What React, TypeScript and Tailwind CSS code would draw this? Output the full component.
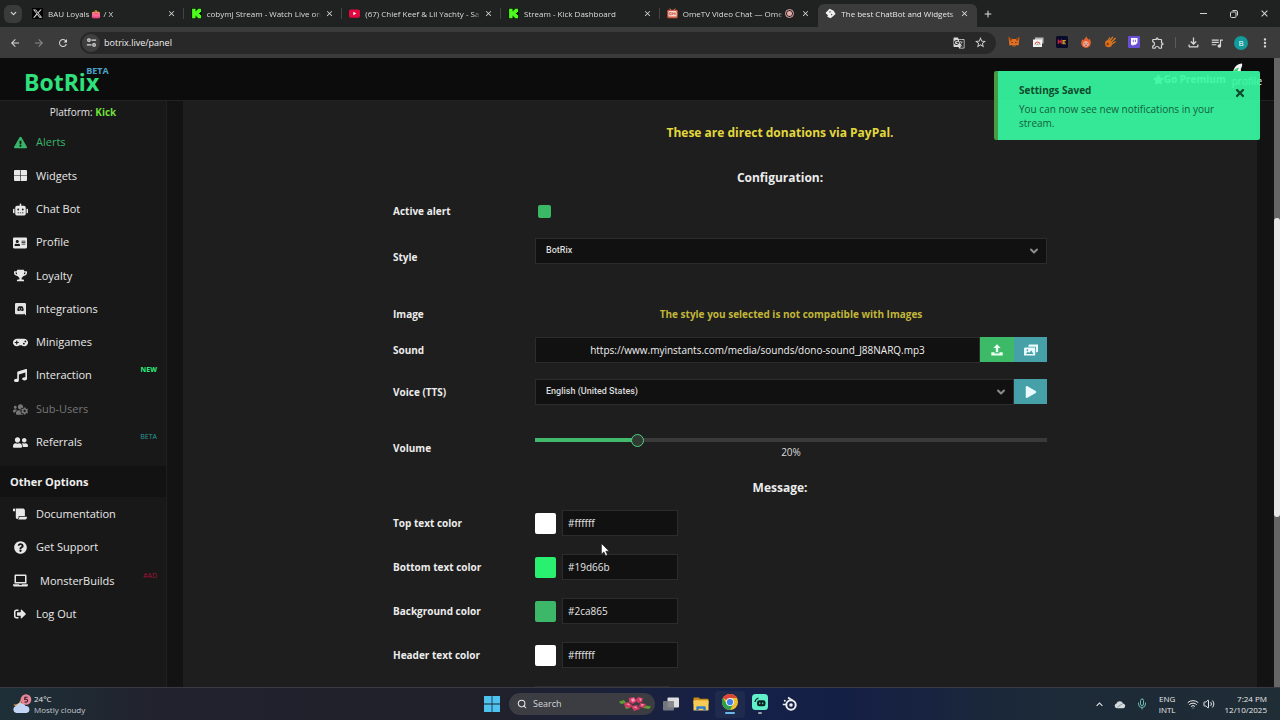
import { useState, type ReactNode } from "react";
import {
  FaAddressCard,
  FaExclamationTriangle,
  FaGamepad,
  FaLaptop,
  FaMusic,
  FaPlay,
  FaQuestionCircle,
  FaRobot,
  FaScroll,
  FaSignOutAlt,
  FaStar,
  FaTimes,
  FaTrophy,
  FaUserFriends,
  FaUsersCog,
} from "react-icons/fa";
import {
  MdArrowBack,
  MdArrowForward,
  MdClose,
  MdExpandLess,
  MdGTranslate,
  MdMoreVert,
  MdOutlineExtension,
  MdOutlineFileDownload,
  MdOutlineQueueMusic,
  MdRefresh,
  MdStarOutline,
} from "react-icons/md";
import { ChevronDown, Mic, Plus, Search, Volume2, Wifi } from "lucide-react";

/* ---------- drawings ---------- */

const XLogo = () => (
  <svg viewBox="0 0 24 24" className="size-[11px] shrink-0 bg-black">
    <path
      fill="#d8d8d8"
      d="M18.2 3h3.1l-6.9 7.9L22.5 21h-6.3l-5-6.5L5.500 21H2.400l7.300-8.400L2 3h6.500l4.500 6zm-1.100 16.200h1.700L7.500 4.700H5.700z"
    />
  </svg>
);

const KickLogo = () => (
  <svg viewBox="0 0 12 12" className="size-[11px] shrink-0">
    <rect width="12" height="12" rx="1" fill="#0b1a08" />
    <path fill="#4dfb1c" d="M1.200 .8h3.800v2.700h1V2.300h1.200V.8H11v3.600H9.800v1.100H8.600v1h1.200v1.100H11v3.600H7.200V9.700H6V8.500H5v2.700H1.200z" />
  </svg>
);

const YouTubeLogo = () => (
  <svg viewBox="0 0 12 12" className="size-[11px] shrink-0">
    <rect y="1.500" width="12" height="9" rx="2" fill="#e5073f" />
    <path fill="#fff" d="M4.700 4v4L8 6z" />
  </svg>
);

const OmeLogo = () => (
  <svg viewBox="0 0 12 12" className="size-[11px] shrink-0">
    <path stroke="#d9765f" strokeWidth="1" d="M3 .5 5 3M9 .5 7 3" />
    <rect x=".3" y="2" width="11.400" height="9.200" rx="1.500" fill="#d35a45" />
    <rect x="1.500" y="3.300" width="9" height="6" rx="1" fill="#f3d9cf" />
    <path stroke="#d35a45" strokeWidth=".9" fill="none" d="M2.600 5h2v2.400h-2zM6 7.500V5l1 1.200L8 5v2.500M9 5v2.500" />
  </svg>
);

const BotrixLogo = () => (
  <svg viewBox="0 0 12 12" className="size-[11px] shrink-0">
    <path fill="#f2f2f2" d="M5 .8 9.500 3l2 3.500L8.800 9 6 11.200 2.500 9.600l.7-1.800L.5 5.500z" />
    <path fill="#222" d="m5 3.200 1.500.9L5 5.400zM6.800 6.300l1.500.6-1.500 1.400z" />
  </svg>
);

const SiteInfo = () => (
  <svg viewBox="0 0 12 12" className="size-[11px]" fill="none" stroke="#dcdcdc" strokeWidth="1.300">
    <circle cx="3.200" cy="3.400" r="1.400" />
    <path d="M6 3.400h5M1 8.600h5" />
    <circle cx="8.800" cy="8.600" r="1.400" />
  </svg>
);

const Fox = () => (
  <svg viewBox="0 0 12 12" className="size-3">
    <path fill="#e2701f" d="m.5 1 3.700 2h3.600l3.700-2-.6 5-.3 3.600-2.600-.5L7 10.600H5l-1-1.500-2.600.5L1.100 6z" />
    <path fill="#8f3d10" d="m.5 1 3.700 2-1.400 2.500zM11.500 1 7.800 3l1.400 2.500z" />
    <path fill="#1c2430" d="M3 6h1.800l-.3 1.200zM9 6H7.200l.3 1.200zM5.200 9.400h1.600l-.3.900h-1z" />
  </svg>
);

const Cards = () => (
  <svg viewBox="0 0 12 12" className="size-3">
    <path fill="#b9b9b9" d="M3 1.500h8.500v6H3z" />
    <path fill="#f4f4f4" d="M1 3.500h9V11H1z" />
    <path fill="none" stroke="#d94a3d" strokeWidth="1" d="M3 8.500a2.500 2.500 0 0 1 5 0" />
    <path fill="none" stroke="#3d8a4f" strokeWidth="1" d="M4.500 8.900a1.200 1.200 0 0 1 2 0" />
  </svg>
);

const McBadge = () => (
  <svg viewBox="0 0 12 12" className="size-3">
    <rect width="12" height="12" rx="1.500" fill="#090b2b" />
    <path fill="none" stroke="#d2233b" strokeWidth="1.100" d="M2.300 8V4.300l1.500 1.800 1.500-1.800V8" />
    <path fill="none" stroke="#e0a026" strokeWidth="1.100" d="M9.800 4.500H7v3.200h2.800M7 6.100h2.200" />
  </svg>
);

const FlameFace = () => (
  <svg viewBox="0 0 12 12" className="size-3">
    <path fill="#e8622f" d="M6.200 0c.3 1.800 1.600 2.400 2.300 3.700L9.700 2.800C10.600 4.500 10.900 5.800 10.800 7.200A4.800 4.800 0 0 1 1.200 7.200C1.100 5.500 2 4.600 2.400 3.300l1.200.9C4.300 2.900 5.900 2 6.200 0z" />
    <circle cx="6" cy="7.900" r="2.700" fill="#f3b9ae" />
    <path stroke="#7a2018" strokeWidth=".8" fill="none" d="M4.800 6.800v1M7.200 6.800v1M4.800 9q1.200.8 2.400 0" />
  </svg>
);

const Comet = () => (
  <svg viewBox="0 0 12 12" className="size-3">
    <path stroke="#e07a1f" strokeWidth="1.300" d="M5.500 5 9 .8M7 6.500 11.500 2M8 8l3.500-2.500M4 4.500 6 1.500" />
    <circle cx="4.600" cy="7.600" r="3.600" fill="#d9701c" />
    <circle cx="3.700" cy="8" r="1.200" fill="#8b3d0d" />
  </svg>
);

const TwitchBadge = () => (
  <svg viewBox="0 0 12 12" className="size-3">
    <rect width="12" height="12" rx="1" fill="#6a4fd6" />
    <path fill="#fff" d="M3 2h6.500v4.800L7.500 8.800H6L4.600 10V8.800H3z" />
    <path stroke="#6a4fd6" strokeWidth=".9" d="M5.300 3.700v2.400M7.400 3.700v2.400" />
  </svg>
);

const WidgetGrid = () => (
  <svg viewBox="0 0 13 11" className="h-[11px] w-[13px]" fill="currentColor">
    <path d="M1 0h5.200v5.200H0V1a1 1 0 0 1 1-1zM6.800 0H12a1 1 0 0 1 1 1v4.200H6.800zM0 5.800h6.200V11H1a1 1 0 0 1-1-1zM6.800 5.800H13V10a1 1 0 0 1-1 1H6.800z" />
  </svg>
);

const DiscordSquare = () => (
  <svg viewBox="0 0 12 14" className="h-[13px] w-[11px]">
    <path fill="#e3e3e3" d="M1.400 0h9.200A1.400 1.400 0 0 1 12 1.400V13.500L10.300 12 9.400 11.200l.4 1H1.400A1.400 1.400 0 0 1 0 10.800V1.400A1.400 1.400 0 0 1 1.400 0z" />
    <path fill="#181818" d="M3.700 3.800C4.600 3.200 7.400 3.200 8.300 3.800 9.200 5.300 9.500 6.500 9.400 8c-.7.600-1.300.7-1.900.7l-.4-.6H4.900l-.4.6C3.900 8.700 3.300 8.600 2.600 8c-.1-1.500.2-2.700 1.100-4.200z" />
    <circle cx="4.800" cy="6.300" r=".75" fill="#e3e3e3" />
    <circle cx="7.200" cy="6.300" r=".75" fill="#e3e3e3" />
  </svg>
);

const UploadTray = () => (
  <svg viewBox="0 0 12 12" className="size-3">
    <path fill="#eafff1" d="M6 .3 9.700 4H7.200v4.300H4.800V4H2.300z" />
    <path fill="#eafff1" d="M.3 8.200h3.300v1.300h4.800V8.200h3.300v3.300H.3z" />
  </svg>
);

const PhotoStack = () => (
  <svg viewBox="0 0 14 12" className="h-3 w-[14px]">
    <path fill="#e9fbff" d="M4.500 1.600 5 .6h9v7.200l-2 .6V2.800H4.500z" />
    <path fill="#e9fbff" fillRule="evenodd" d="M.8 3.600H11.200V11.600H0V4.500zM1.800 10h7.600L7.400 6.400 5.300 8.800 3.800 7.800zM3.300 5.200a.9.900 0 1 0 .1 0z" />
  </svg>
);

const Weather = () => (
  <svg viewBox="0 0 20 20" className="size-5">
    <path fill="#f0a848" d="M8 4C9 8 6 11 1.500 10.500 3 13 7 14 10 12z" />
    <path fill="#c2d4f4" d="M4.500 19a3.600 3.600 0 0 1-.2-7.100A5 5 0 0 1 13.500 12a3.500 3.500 0 0 1 .8 7z" />
    <circle cx="14" cy="5.500" r="5.300" fill="#e58699" />
    <path fill="none" stroke="#3b1a25" strokeWidth="1.100" d="M15.600 3.200h-2.700l-.2 2.200c2.500-.5 3.400.6 2.800 1.900-.5 1-2 1.100-2.900.5" />
  </svg>
);

const WindowsLogo = () => (
  <svg viewBox="0 0 16 16" className="size-4" fill="#4fc3f0">
    <path d="M0 0h7.600v7.600H0zM8.400 0H16v7.600H8.400zM0 8.400h7.600V16H0zM8.400 8.400H16V16H8.400z" />
  </svg>
);

const Flowers = () => (
  <svg viewBox="0 0 32 16" className="h-4 w-8">
    <path fill="#5c9e2f" d="M0 5.500 5 4l2 3-5 1zM24 12l3-2.500 5 1-2 2.500zM6 11l4-1 1 2-4 1z" />
    <path fill="#d43a63" d="M5 7.500 9 6l4 3-2 3-5-1zM10 2l5-1 3 4-4 3-4-2zM19 1l5 1-1 4-4 1-2-3zM21 7l6 1-2 4-5-1zM12 10l6-1 3 4-6 2z" />
    <path fill="#f2a0b8" d="m12 3 3-1 1 3-3 1zM20 2.500l2.500.5-1 2zM14 11l3-.500 1 2zM22 8l3 .500-2 2zM7 8l3-.500 1 2z" />
  </svg>
);

const TaskView = () => (
  <svg viewBox="0 0 16 16" className="size-4">
    <rect x="4.500" y="1.500" width="11.500" height="10" rx="1" fill="#dedede" />
    <rect x="0" y="5" width="11" height="9.500" rx="1" fill="#7d8085" fillOpacity=".9" />
  </svg>
);

const Folder = () => (
  <svg viewBox="0 0 17 16" className="h-4 w-[17px]">
    <path fill="#c98a17" d="M.5 2A1 1 0 0 1 1.500 1H6l1.500 1.500h8a1 1 0 0 1 1 1V8H.5z" />
    <rect x=".5" y="4" width="16" height="11" rx="1" fill="#f5cc55" />
    <path fill="#2b7cd0" d="M3.500 15v-3.500a1 1 0 0 1 1-1h8a1 1 0 0 1 1 1V15h-2.500v-2h-5v2z" />
  </svg>
);

const Chrome = () => (
  <svg viewBox="0 0 16 16" className="size-4">
    <circle cx="8" cy="8" r="8" fill="#f1bf2b" />
    <path fill="#dd4637" d="M8 8 1.070 4A8 8 0 0 1 14.930 4H8z" />
    <path fill="#2e9e4f" d="M1.070 4A8 8 0 0 0 8 16l3.460-6L8 8 4.540 10z" />
    <circle cx="8" cy="8" r="4" fill="#f3f3f3" />
    <circle cx="8" cy="8" r="3.100" fill="#3f7fe8" />
  </svg>
);

const StreamBot = () => (
  <svg viewBox="0 0 16 16" className="size-4">
    <rect width="16" height="16" rx="3.500" fill="#62f0cb" />
    <path fill="none" stroke="#0c1f22" strokeWidth="1.200" d="M3 8a5 5 0 0 1 3.500-4" />
    <rect x="5" y="6.300" width="8.500" height="6" rx="2.200" fill="#0c1f22" />
    <path stroke="#62f0cb" strokeWidth="1.100" d="M7.800 8.600v1.600M10.700 8.600v1.600" />
  </svg>
);

const SteelEye = () => (
  <svg viewBox="0 0 16 16" className="size-4">
    <circle cx="9" cy="9" r="4.700" fill="none" stroke="#eee" strokeWidth="2" />
    <circle cx="9" cy="9" r="1.800" fill="#eee" />
    <path stroke="#eee" strokeWidth="1.700" d="M6 1.500 10.500 4.500M.8 8.500h4" />
    <circle cx="2.800" cy="4.800" r="1" fill="#eee" />
  </svg>
);

const Cloud = () => (
  <svg viewBox="0 0 14 10" className="h-[9px] w-3">
    <path fill="#d5dadd" d="M3.300 9.500A3 3 0 0 1 2.800 3.700 4.200 4.200 0 0 1 10.600 3.800 2.900 2.900 0 0 1 10.800 9.500z" />
    <path stroke="#7f8b92" strokeWidth="1" d="m4 8 6-4" />
  </svg>
);

const Pointer = () => (
  <svg viewBox="0 0 10 14" className="pointer-events-none absolute top-[543px] left-[601px] h-[14px] w-[10px]">
    <path fill="#fff" stroke="#111" strokeWidth=".6" d="M.4.4v10.800l2.500-2.300 1.700 3.800 1.900-.9-1.700-3.600h3.400z" />
  </svg>
);

/* ---------- browser ---------- */

const tabs = [
  { icon: <XLogo />, title: "BAU Loyals 👛 / X" },
  { icon: <KickLogo />, title: "cobymj Stream - Watch Live on" },
  { icon: <YouTubeLogo />, title: "(67) Chief Keef & Lil Yachty - Sa" },
  { icon: <KickLogo />, title: "Stream - Kick Dashboard" },
  { icon: <OmeLogo />, title: "OmeTV Video Chat — Ome", recording: true },
  { icon: <BotrixLogo />, title: "The best ChatBot and Widgets", active: true },
];

function TabStrip() {
  return (
    <div className="flex h-[27px] shrink-0 items-center bg-[#202221] pl-1 text-[8px] text-[#dcdcdc]">
      <button aria-label="Search tabs" className="mr-[3px] flex size-[18px] items-center justify-center rounded-md bg-[#3a3b3b]">
        <ChevronDown className="size-[9px]" strokeWidth={3} />
      </button>
      <div className="grid h-full max-w-[952px] grow grid-cols-6">
        {tabs.map((tab, i) => (
          <div
            key={i}
            className={
              tab.active
                ? "mt-1 flex min-w-0 items-center rounded-t-md bg-[#3b3b3b] pr-2 pb-1 pl-[7px] text-[#e8e8e8]"
                : "flex min-w-0 items-center pl-[7px]"
            }
          >
            {tab.icon}
            <span className="ml-[5px] min-w-0 flex-1 overflow-hidden mask-r-from-95% whitespace-nowrap">{tab.title}</span>
            {tab.recording && (
              <span className="ml-[2px] flex size-[9px] shrink-0 items-center justify-center rounded-full border border-[#e6a9a9]">
                <span className="size-[5px] rounded-full bg-[#e6a9a9]" />
              </span>
            )}
            <button aria-label="Close tab" className={tab.recording ? "ml-[7px] shrink-0" : "ml-1 shrink-0"}>
              <MdClose className="size-[9px]" />
            </button>
            {!tab.active && <span className={i < 4 ? "ml-[7px] h-[11px] w-px bg-[#444]" : "ml-[8px]"} />}
          </div>
        ))}
      </div>
      <button aria-label="New tab" className="ml-[6px]">
        <Plus className="size-[10px]" strokeWidth={2.5} />
      </button>
      <div className="ml-auto flex items-center">
        <button aria-label="Minimize" className="flex w-[30px] justify-center">
          <span className="h-px w-[7px] bg-[#d4d4d4]" />
        </button>
        <button aria-label="Restore" className="flex w-[31px] justify-center">
          <svg viewBox="0 0 8 8" className="size-2" fill="none" stroke="#d4d4d4" strokeWidth="1">
            <rect x=".5" y="2" width="5.500" height="5.500" rx="1" />
            <path d="M2.500.5H6A1.500 1.500 0 0 1 7.500 2v3.500" />
          </svg>
        </button>
        <button aria-label="Close window" className="flex w-[31px] justify-center">
          <MdClose className="size-[11px]" />
        </button>
      </div>
    </div>
  );
}

const extensions: { name: string; icon: ReactNode }[] = [
  { name: "Wallet", icon: <Fox /> },
  { name: "Cards", icon: <Cards /> },
  { name: "MC", icon: <McBadge /> },
  { name: "Flame", icon: <FlameFace /> },
  { name: "Comet", icon: <Comet /> },
  { name: "Twitch", icon: <TwitchBadge /> },
  { name: "Extensions", icon: <MdOutlineExtension className="size-[14px]" /> },
];

function Toolbar() {
  return (
    <div className="flex h-[31px] shrink-0 items-center bg-[#3b3b3b] px-[3px] text-[#d8d8d8]">
      <button aria-label="Back" className="flex w-6 justify-center">
        <MdArrowBack className="size-3" />
      </button>
      <button aria-label="Forward" className="flex w-6 justify-center text-[#8a8a8a]">
        <MdArrowForward className="size-3" />
      </button>
      <button aria-label="Reload" className="flex w-6 justify-center">
        <MdRefresh className="size-3" />
      </button>
      <div className="ml-[5px] flex h-[22px] flex-1 items-center rounded-full bg-[#282828] pr-[9px] pl-[2px]">
        <button aria-label="Site information" className="flex size-[18px] items-center justify-center rounded-full bg-[#3f3f3f]">
          <SiteInfo />
        </button>
        <input
          aria-label="Address"
          defaultValue="botrix.live/panel"
          className="ml-1 min-w-0 flex-1 bg-transparent text-[9px] text-[#f0f0f0] outline-none"
        />
        <button aria-label="Translate">
          <MdGTranslate className="size-3" />
        </button>
        <button aria-label="Bookmark" className="ml-[9px]">
          <MdStarOutline className="size-[13px]" />
        </button>
      </div>
      <div className="ml-[6px] flex">
        {extensions.map((e) => (
          <button key={e.name} aria-label={e.name} className="flex w-6 justify-center">
            {e.icon}
          </button>
        ))}
      </div>
      <span className="mx-[5px] h-[11px] w-px bg-[#5c5c5c]" />
      <button aria-label="Downloads" className="flex w-6 justify-center">
        <MdOutlineFileDownload className="size-[15px]" />
      </button>
      <button aria-label="Media" className="flex w-6 justify-center">
        <MdOutlineQueueMusic className="size-[14px]" />
      </button>
      <button aria-label="Account" className="flex w-6 justify-center">
        <span className="flex size-[14px] items-center justify-center rounded-full bg-[#139a9a] text-[8px] text-white">B</span>
      </button>
      <button aria-label="Menu" className="flex w-6 justify-center">
        <MdMoreVert className="size-[14px]" />
      </button>
    </div>
  );
}

/* ---------- site ---------- */

function SiteHeader() {
  return (
    <header className="flex h-[43px] shrink-0 items-center justify-between border-b border-[#222] bg-[#0c0c0c] pr-[12px] pl-6">
      <a href="#home" className="flex items-start font-bold">
        <span className="pt-[6px] text-[23px] leading-[26px] text-[#2fe07c]">BotRix</span>
        <span className="-ml-[13px] text-[9px] leading-[15px] text-[#4ba3c7]">BETA</span>
      </a>
      <nav className="flex items-center gap-[6px] text-[10px] text-white">
        <a href="#premium" className="flex items-center font-bold">
          <FaStar className="size-[11px]" />
          Go Premium
        </a>
        <a href="#profile" className="-mt-2 flex flex-col leading-[12px]">
          <svg viewBox="0 0 12 12" className="size-3">
            <path fill="#f4f4f4" d="M1 9C2 4 5 1 10 .5 11 4 8 5 9 8z" />
            <path fill="#3ccb62" d="M1 9c2-3 4-4 6-4.500L5 9z" />
          </svg>
          profile
        </a>
      </nav>
    </header>
  );
}

type NavItem = { label: string; icon: ReactNode; tag?: ReactNode; tone?: string };

const mainItems: NavItem[] = [
  { label: "Alerts", icon: <FaExclamationTriangle />, tone: "text-[#38b56a]" },
  { label: "Widgets", icon: <WidgetGrid /> },
  { label: "Chat Bot", icon: <FaRobot className="size-[15px]" /> },
  { label: "Profile", icon: <FaAddressCard className="size-[14px]" /> },
  { label: "Loyalty", icon: <FaTrophy /> },
  { label: "Integrations", icon: <DiscordSquare /> },
  { label: "Minigames", icon: <FaGamepad className="size-[15px]" /> },
  { label: "Interaction", icon: <FaMusic />, tag: <span className="font-bold text-[#2cf07d]">NEW</span> },
  { label: "Sub-Users", icon: <FaUsersCog className="size-[15px]" />, tone: "text-[#777]" },
  { label: "Referrals", icon: <FaUserFriends className="size-[15px]" />, tag: <span className="text-[#2b9a98]">BETA</span> },
];

const otherItems: NavItem[] = [
  { label: "Documentation", icon: <FaScroll className="size-[14px]" /> },
  { label: "Get Support", icon: <FaQuestionCircle /> },
  { label: "MonsterBuilds", icon: <FaLaptop className="size-[15px]" />, tag: <span className="text-[#a3123f]">#AD</span> },
  { label: "Log Out", icon: <FaSignOutAlt className="size-[12px]" /> },
];

function NavList({ items, className }: { items: NavItem[]; className: string }) {
  return (
    <ul className={className}>
      {items.map((item) => (
        <li key={item.label} className={`flex flex-1 ${item.tone ?? "text-[#e8e8e8]"}`}>
          <a href={`#${item.label}`} className="flex flex-1 items-center pr-[9px] pl-3 text-[11px]">
            <span className="flex w-4 justify-center text-[13px]">{item.icon}</span>
            <span className={item.label === "MonsterBuilds" ? "ml-3" : "ml-2"}>{item.label}</span>
            {item.tag && <span className="mb-[10px] ml-auto text-[7px]">{item.tag}</span>}
          </a>
        </li>
      ))}
    </ul>
  );
}

function Sidebar() {
  return (
    <aside className="w-[167px] shrink-0 overflow-hidden border-r border-[#202020] bg-[#181818]">
      <p className="h-[25px] text-center text-[10px] leading-[23px] text-[#e4e4e4]">
        Platform: <b className="text-[#6fdf3c]">Kick</b>
      </p>
      <NavList items={mainItems} className="flex h-[333px] flex-col" />
      <h2 className="mt-[7px] h-[31px] bg-[#121212] pl-[10px] text-[11px] leading-[31px] font-bold text-[#efefef]">Other Options</h2>
      <NavList items={otherItems} className="flex h-[134px] flex-col" />
    </aside>
  );
}

function Row({ id, label, className, children }: { id?: string; label: string; className: string; children: ReactNode }) {
  return (
    <div className={`grid grid-cols-[142px_minmax(0,1fr)] ${className}`}>
      {id ? (
        <label htmlFor={id} className="self-center text-[10px] font-bold">
          {label}
        </label>
      ) : (
        <span className="self-center text-[10px] font-bold">{label}</span>
      )}
      {children}
    </div>
  );
}

function Select({ id, value }: { id: string; value: string }) {
  return (
    <div className="relative min-w-0 flex-1">
      <select
        id={id}
        defaultValue={value}
        className="block h-[26px] w-full appearance-none border border-[#2c2c2c] bg-[#111] px-[10px] font-['Roboto','Liberation_Sans',sans-serif] text-[9px] font-medium text-[#dcdcdc]"
      >
        <option>{value}</option>
      </select>
      <ChevronDown className="pointer-events-none absolute top-[7px] right-[7px] size-3 text-[#8c8c8c]" strokeWidth={4} />
    </div>
  );
}

const colors = [
  { id: "top", label: "Top text color", text: "#ffffff", swatch: "#ffffff" },
  { id: "bottom", label: "Bottom text color", text: "#19d66b", swatch: "#29f06e" },
  { id: "background", label: "Background color", text: "#2ca865", swatch: "#3cb868" },
  { id: "header", label: "Header text color", text: "#ffffff", swatch: "#ffffff" },
];

function AlertForm() {
  const [volume, setVolume] = useState(20);
  return (
    <form className="mx-auto w-full max-w-[654px] pt-[18px] text-[#ececec]">
      <h1 className="pl-[120px] text-center text-[12px] leading-[28px] font-bold text-[#e2d83c]">
        These are direct donations via PayPal.
      </h1>
      <h2 className="mt-[17px] pl-[120px] text-center text-[12px] leading-[28px] font-bold">Configuration:</h2>

      <Row id="active" label="Active alert" className="mt-[5px] h-[28px]">
        <input id="active" type="checkbox" defaultChecked className="ml-[3px] size-[13px] appearance-none self-center rounded-[2px] bg-[#3ab866]" />
      </Row>
      <Row id="style" label="Style" className="mt-[13px] h-[38px]">
        <Select id="style" value="BotRix" />
      </Row>
      <Row label="Image" className="mt-6 h-[28px]">
        <p className="self-center text-center text-[10px] font-bold text-[#c1b638]">
          The style you selected is not compatible with Images
        </p>
      </Row>
      <Row id="sound" label="Sound" className="mt-[9px] h-[26px]">
        <div className="flex">
          <input
            id="sound"
            defaultValue="https://www.myinstants.com/media/sounds/dono-sound_J88NARQ.mp3"
            className="h-[26px] min-w-0 flex-1 border border-[#2c2c2c] bg-[#111] text-center text-[10px] text-[#f0f0f0]"
          />
          <button type="button" aria-label="Upload sound" className="flex h-[25px] w-[34px] items-center justify-center bg-[#3cba68]">
            <UploadTray />
          </button>
          <button type="button" aria-label="Open library" className="flex h-[25px] w-[33px] items-center justify-center bg-[#45a0a8]">
            <PhotoStack />
          </button>
        </div>
      </Row>
      <Row id="voice" label="Voice (TTS)" className="mt-4 h-[26px]">
        <div className="flex">
          <Select id="voice" value="English (United States)" />
          <button type="button" aria-label="Play voice" className="flex h-[25px] w-[33px] items-center justify-center bg-[#45a0a8] text-[#e9fbff]">
            <FaPlay className="size-3" />
          </button>
        </div>
      </Row>
      <Row id="volume" label="Volume" className="mt-[29px] h-[28px]">
        <div>
          <div
            className="flex h-3 items-center bg-[length:100%_4px] bg-center bg-no-repeat"
            style={{ backgroundImage: `linear-gradient(to right, #42b96d ${volume}%, #3a3a3a ${volume}%)` }}
          >
            <input
              id="volume"
              type="range"
              min={0}
              max={100}
              value={volume}
              onChange={(e) => setVolume(Number(e.target.value))}
              className="-mx-[6px] h-[13px] w-[calc(100%+12px)] shrink-0 appearance-none bg-transparent [&::-webkit-slider-thumb]:size-[13px] [&::-webkit-slider-thumb]:appearance-none [&::-webkit-slider-thumb]:rounded-full [&::-webkit-slider-thumb]:border [&::-webkit-slider-thumb]:border-[#4fd080] [&::-webkit-slider-thumb]:bg-[#303a33]"
            />
          </div>
          <output htmlFor="volume" className="block text-center text-[10px] leading-[13px] text-[#dcdcdc]">
            {volume}%
          </output>
        </div>
      </Row>

      <h2 className="mt-3 pl-[120px] text-center text-[12px] leading-[28px] font-bold">Message:</h2>
      <div className="mt-2 flex flex-col gap-[18px]">
        {colors.map((c) => (
          <Row key={c.id} id={c.id} label={c.label} className="h-[26px]">
            <div className="flex items-center gap-[6px]">
              <input
                type="color"
                aria-label={`${c.label} swatch`}
                defaultValue={c.swatch}
                className="size-[21px] appearance-none overflow-hidden rounded-[2px] [&::-webkit-color-swatch]:border-0 [&::-webkit-color-swatch-wrapper]:p-0"
              />
              <input
                id={c.id}
                defaultValue={c.text}
                className="h-[26px] w-[116px] border border-[#2c2c2c] bg-[#111] px-[5px] text-[10px] text-[#e6e6e6]"
              />
            </div>
          </Row>
        ))}
        <div className="h-[26px] pl-[142px]">
          <input aria-label="Font" className="block h-[26px] w-[134px] border border-[#2c2c2c] bg-[#111]" />
        </div>
      </div>
    </form>
  );
}

function Toast() {
  return (
    <div role="status" className="absolute top-[71px] right-5 flex h-[69px] w-[266px] rounded-[2px] border-l-4 border-[#4a9a44] bg-[#36f8a0]/93 pt-3 pl-[21px]">
      <div className="max-w-[212px] flex-1 text-[10px] leading-[14px] text-[#14603b]">
        <h3 className="font-bold text-[#0f4a2c]">Settings Saved</h3>
        <p className="mt-[5px]">You can now see new notifications in your stream.</p>
      </div>
      <button aria-label="Dismiss" className="mt-1 mr-[14px] ml-auto self-start text-[#0f4a2c]">
        <FaTimes className="size-3" />
      </button>
    </div>
  );
}

/* ---------- taskbar ---------- */

function Taskbar() {
  return (
    <footer className="grid h-[33px] shrink-0 grid-cols-[1fr_auto_1fr] items-center border-t border-[#3a3b42] bg-[linear-gradient(90deg,#1e3038_0%,#21222d_12%,#20212b_38%,#16214a_58%,#141f45_66%,#1c2938_80%,#1f2d36_100%)] text-[8px] text-[#e8e8e8]">
      <div className="flex items-center gap-[2px] pl-3">
        <Weather />
        <p className="leading-[11px]">
          24°C
          <br />
          <span className="text-[#c4c9cf]">Mostly cloudy</span>
        </p>
      </div>
      <div className="flex items-center pl-2">
        <button aria-label="Start">
          <WindowsLogo />
        </button>
        <label className="ml-[9px] flex h-[22px] w-[146px] items-center rounded-full bg-[#3b3d43] pr-1 pl-2">
          <Search className="size-[10px]" strokeWidth={2.5} />
          <input aria-label="Search" placeholder="Search" className="ml-[6px] min-w-0 flex-1 bg-transparent text-[9px] placeholder:text-[#d4d6d8]" />
          <Flowers />
        </label>
        <button aria-label="Task view" className="ml-2 flex w-[30px] justify-center pr-[14px]">
          <TaskView />
        </button>
        <button aria-label="File Explorer" className="flex w-[30px] justify-center pr-[14px]">
          <Folder />
        </button>
        <button aria-label="Chrome" className="-ml-[8px] flex h-[27px] w-[30px] flex-col items-center justify-center gap-[2px] rounded bg-[#202a4c]">
          <Chrome />
          <span className="h-[2px] w-[10px] rounded bg-[#68b9e8]" />
        </button>
        <button aria-label="Streamlabs" className="flex w-[30px] flex-col items-center gap-[2px]">
          <StreamBot />
          <span className="h-[2px] w-1 rounded bg-[#9a9fa8]" />
        </button>
        <button aria-label="SteelSeries" className="flex w-[29px] justify-center">
          <SteelEye />
        </button>
      </div>
      <div className="flex items-center justify-end pr-[13px]">
        <MdExpandLess className="size-[13px]" />
        <span className="ml-2">
          <Cloud />
        </span>
        <Mic className="ml-[10px] size-3 text-[#6fb7b4]" />
        <p className="ml-[11px] text-center leading-[11px]">
          ENG
          <br />
          INTL
        </p>
        <Wifi className="ml-[11px] size-3" />
        <Volume2 className="ml-1 size-3" />
        <p className="ml-[10px] text-right leading-[11px]">
          7:24 PM
          <br />
          12/10/2025
        </p>
      </div>
    </footer>
  );
}

export default function App() {
  return (
    <div className="relative flex h-screen flex-col overflow-hidden bg-[#0c0c0c] font-['Open_Sans','Noto_Sans',sans-serif]">
      <TabStrip />
      <Toolbar />
      <div className="flex min-h-0 flex-1">
        <div className="flex min-w-0 flex-1 flex-col">
          <SiteHeader />
          <div className="flex min-h-0 flex-1">
            <Sidebar />
            <main className="min-w-0 flex-1 overflow-hidden bg-[#131313] pr-[17px] pl-4">
              <div className="h-full overflow-hidden bg-[#1e1e1e]">
                <AlertForm />
              </div>
            </main>
          </div>
        </div>
        <div className="flex w-[6px] shrink-0 flex-col bg-[#666]">
          <span className="grow-[16]" />
          <span className="grow-[30] rounded-full bg-[#e8e8e8]" />
          <span className="grow-[17]" />
        </div>
      </div>
      <Taskbar />
      <Toast />
      <Pointer />
    </div>
  );
}
